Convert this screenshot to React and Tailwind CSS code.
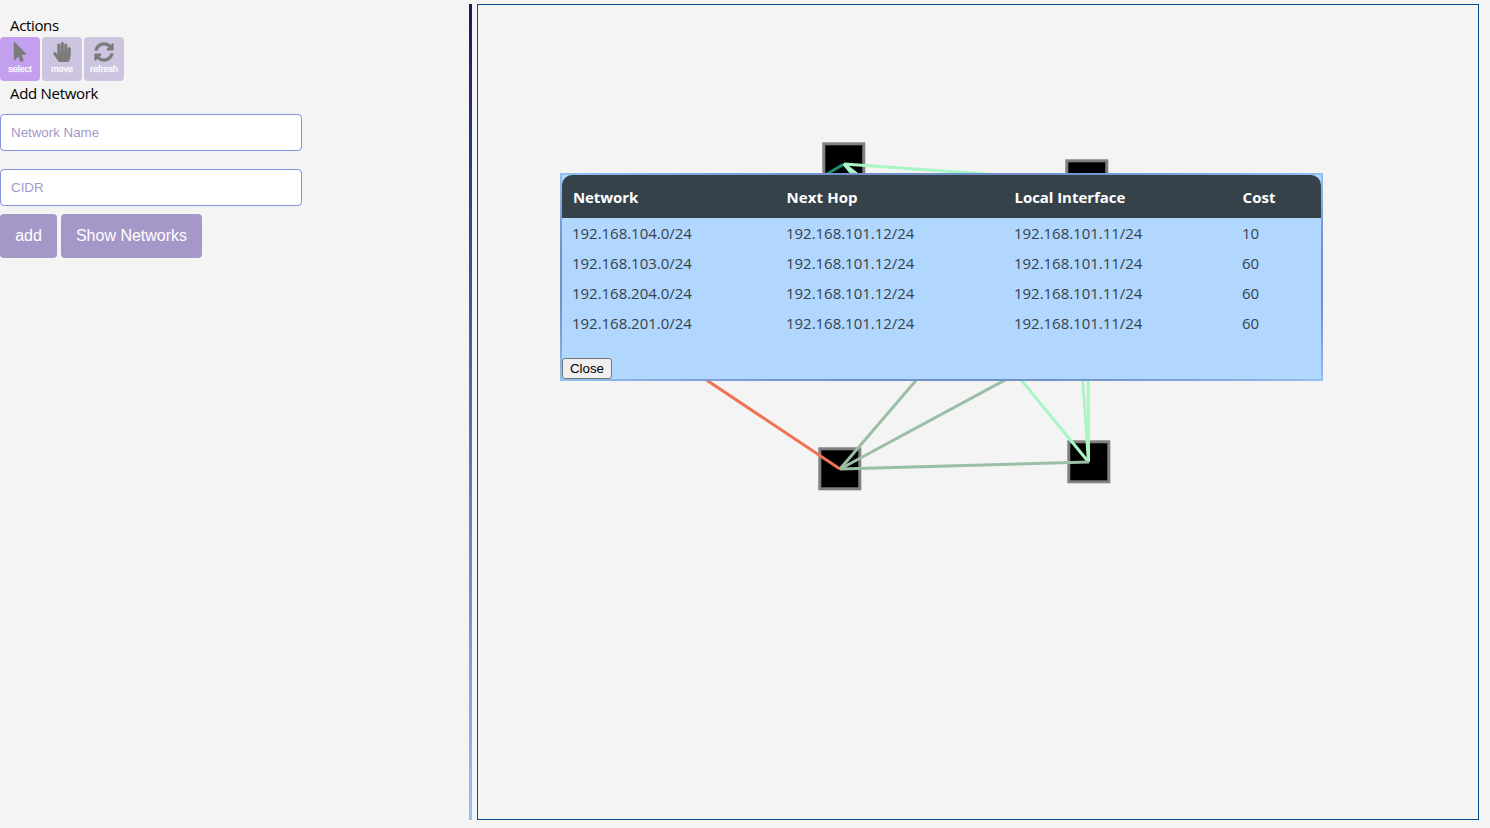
import { FaMousePointer, FaHandPaper, FaSyncAlt } from "react-icons/fa";

const actions = [
  { label: "select", Icon: FaMousePointer, bg: "bg-[#c2a0ee]" },
  { label: "move", Icon: FaHandPaper, bg: "bg-[#cdc5df]" },
  { label: "refresh", Icon: FaSyncAlt, bg: "bg-[#cdc5df]" },
];

const routes = [
  ["192.168.104.0/24", "192.168.101.12/24", "192.168.101.11/24", "10"],
  ["192.168.103.0/24", "192.168.101.12/24", "192.168.101.11/24", "60"],
  ["192.168.204.0/24", "192.168.101.12/24", "192.168.101.11/24", "60"],
  ["192.168.201.0/24", "192.168.101.12/24", "192.168.101.11/24", "60"],
];

const nodes = [
  [844, 164],
  [1087, 181],
  [840, 469],
  [1089, 462],
];

const links = [
  [844, 164, 600, 308, "#159070"],
  [844, 164, 1087, 181, "#a9f5c5"],
  [844, 164, 1050, 325, "#a9f5c5"],
  [844, 164, 1088.5, 462, "#a9f5c5"],
  [1088.5, 462, 1077, 300, "#a9f5c5"],
  [1088.5, 462, 1088, 181, "#a9f5c5"],
  [840, 469, 600, 309, "#f07354"],
  [840, 469, 1087, 181, "#9bbfa6"],
  [840, 469, 1200, 275, "#9bbfa6"],
  [840, 469, 1089, 462, "#9bbfa6"],
];

function Sidebar() {
  return (
    <aside className="flex w-[469px] shrink-0 flex-col">
      <h2 className="mt-[10px] h-[23px] pl-[10px] text-[15px] leading-[23px] tracking-[-0.35px]">Actions</h2>
      <div className="flex gap-[2px]">
        {actions.map(({ label, Icon, bg }) => (
          <button key={label} className={`flex h-11 w-10 flex-col items-center rounded-[4px] pt-[5px] ${bg}`}>
            <Icon className="size-5 text-[#7b7b7b]" />
            <span className="mt-[2px] font-['Liberation_Sans',sans-serif] text-[9px] leading-[10px] text-white [-webkit-text-stroke:0.25px_white]">{label}</span>
          </button>
        ))}
      </div>
      <h2 className="h-[33px] pl-[10px] text-[15px] leading-[24px] tracking-[-0.3px]">Add Network</h2>
      <div className="flex flex-col gap-[18px] font-['Liberation_Sans',sans-serif] text-[13.33px]">
        <input placeholder="Network Name" className="h-[37px] w-[302px] rounded-[4px] border border-[#8292df] bg-white px-[10px] placeholder:text-[#a598c8]" />
        <input placeholder="CIDR" className="h-[37px] w-[302px] rounded-[4px] border border-[#8292df] bg-white px-[10px] placeholder:text-[#a598c8]" />
      </div>
      <div className="mt-2 flex gap-1 font-['Liberation_Sans',sans-serif] text-base text-white">
        <button className="h-11 w-[57px] rounded-[4px] bg-[#a598c8]">add</button>
        <button className="h-11 w-[141px] rounded-[4px] bg-[#a598c8]">Show Networks</button>
      </div>
    </aside>
  );
}

function RouteTable() {
  return (
    <div className="absolute top-[168px] left-[82px] h-[208px] w-[763px] border-2 bg-[#b1d7ff] [border-image:radial-gradient(farthest-corner,#7191c8_72%,#93c2f2_100%)_2]">
      <table className="w-full table-fixed border-collapse text-left text-[15px]">
        <colgroup>
          <col className="w-[214px]" />
          <col className="w-[228px]" />
          <col className="w-[228px]" />
          <col />
        </colgroup>
        <thead>
          <tr className="h-[43px] text-white">
            <th className="rounded-tl-[10px] bg-[#36424a] p-0 pt-[2px] pl-[11px] font-bold tracking-[-0.1px]">Network</th>
            <th className="bg-[#36424a] p-0 pt-[2px] pl-[10.5px] font-bold tracking-[0.1px]">Next Hop</th>
            <th className="bg-[#36424a] p-0 pt-[2px] pl-[10.5px] font-bold tracking-[-0.05px]">Local Interface</th>
            <th className="rounded-tr-[10px] bg-[#36424a] p-0 pt-[2px] pl-[10.5px] font-bold tracking-[0.1px]">Cost</th>
          </tr>
        </thead>
        <tbody className="text-[#36424a]">
          {routes.map((row) => (
            <tr key={row[0]} className="h-[30px]">
              {row.map((cell, i) => (
                <td key={i} className="p-0 pl-[10px] tracking-[-0.03px]">{cell}</td>
              ))}
            </tr>
          ))}
        </tbody>
      </table>
      <button className="mt-5 block h-[21px] w-[50px] rounded-[3px] border border-[#767676] bg-[#efefef] font-['Liberation_Sans',sans-serif] text-[13.33px] leading-[19px] text-black">Close</button>
    </div>
  );
}

export default function App() {
  return (
    <div className="flex h-[828px] w-[1490px] overflow-hidden bg-[#f4f4f4] py-1 font-['Open_Sans','Noto_Sans',sans-serif] text-black">
      <Sidebar />
      <div className="h-[816px] w-[3px] shrink-0 bg-linear-to-b from-[#1b1b5c] to-[#93c5f5]" />
      <main className="relative ml-[5px] h-[816px] w-[1002px] shrink-0 border border-[#0d4a94]">
        <svg className="block h-[814px] w-[1000px]" viewBox="478 5 1000 814">
          {nodes.map(([x, y]) => (
            <rect key={`${x}-${y}`} x={x - 20.2} y={y - 20.2} width="40" height="40" fill="#000" stroke="#808080" strokeWidth="3" />
          ))}
          {links.map(([x1, y1, x2, y2, color], i) => (
            <line key={i} x1={x1} y1={y1} x2={x2} y2={y2} stroke={color} strokeWidth="3" />
          ))}
        </svg>
        <RouteTable />
      </main>
    </div>
  );
}
